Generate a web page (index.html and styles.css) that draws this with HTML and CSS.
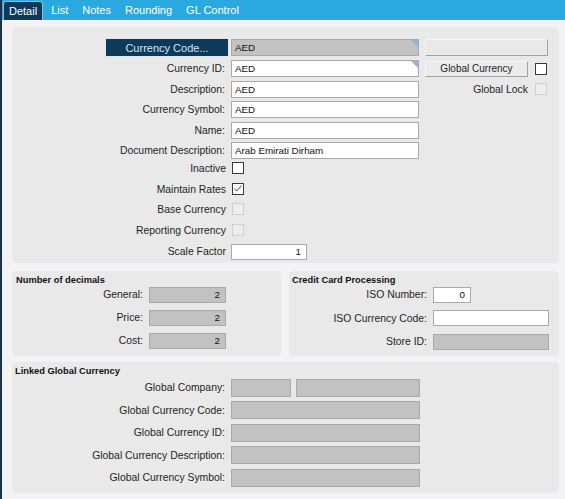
FILE: index.html
```html
<!DOCTYPE html>
<html>
<head>
<meta charset="utf-8">
<link rel="stylesheet" href="styles.css">
</head>
<body>
<div class="app">
  <nav class="tabs">
    <span class="tab active">Detail</span>
    <span class="tab">List</span>
    <span class="tab">Notes</span>
    <span class="tab">Rounding</span>
    <span class="tab">GL Control</span>
  </nav>
  <main class="content">
    <section class="panel panel-main">
      <div class="row row-first">
        <div class="label-cell"><span class="lookup-btn">Currency Code...</span></div>
        <div class="field grey marked">AED</div>
        <div class="side"><span class="btn btn-wide"></span></div>
      </div>
      <div class="row">
        <span class="label-cell">Currency ID:</span>
        <div class="field marked">AED</div>
        <div class="side"><span class="btn btn-global">Global Currency</span><span class="cb"></span></div>
      </div>
      <div class="row">
        <span class="label-cell">Description:</span>
        <div class="field">AED</div>
        <div class="side side-end"><span class="side-label">Global Lock</span><span class="cb disabled"></span></div>
      </div>
      <div class="row">
        <span class="label-cell">Currency Symbol:</span>
        <div class="field">AED</div>
      </div>
      <div class="row">
        <span class="label-cell">Name:</span>
        <div class="field">AED</div>
      </div>
      <div class="row">
        <span class="label-cell">Document Description:</span>
        <div class="field">Arab Emirati Dirham</div>
      </div>
      <div class="row row-check">
        <span class="label-cell cb-label">Inactive</span>
        <div><span class="cb"></span></div>
      </div>
      <div class="row row-check">
        <span class="label-cell cb-label">Maintain Rates</span>
        <div><span class="cb"><svg viewBox="0 0 12 12" width="10" height="10"><polyline points="1.5,5.5 4.5,8.5 10,2" fill="none" stroke="#333" stroke-width="1.1"/></svg></span></div>
      </div>
      <div class="row row-check">
        <span class="label-cell cb-label">Base Currency</span>
        <div><span class="cb disabled"></span></div>
      </div>
      <div class="row row-check">
        <span class="label-cell cb-label">Reporting Currency</span>
        <div><span class="cb disabled"></span></div>
      </div>
      <div class="row row-scale">
        <span class="label-cell cb-label">Scale Factor</span>
        <div class="field num scale">1</div>
      </div>
    </section>

    <div class="panel-pair">
      <section class="panel panel-dec">
        <h3 class="heading">Number of decimals</h3>
        <div class="sub-rows">
          <div class="sub-row"><span class="label-cell">General:</span><div class="field grey num">2</div></div>
          <div class="sub-row"><span class="label-cell">Price:</span><div class="field grey num">2</div></div>
          <div class="sub-row"><span class="label-cell">Cost:</span><div class="field grey num">2</div></div>
        </div>
      </section>
      <section class="panel panel-cc">
        <h3 class="heading">Credit Card Processing</h3>
        <div class="sub-rows">
          <div class="sub-row"><span class="label-cell">ISO Number:</span><div class="field num iso-num">0</div></div>
          <div class="sub-row"><span class="label-cell">ISO Currency Code:</span><div class="field wide"></div></div>
          <div class="sub-row"><span class="label-cell">Store ID:</span><div class="field grey wide"></div></div>
        </div>
      </section>
    </div>

    <section class="panel panel-linked">
      <h3 class="heading">Linked Global Currency</h3>
      <div class="sub-rows">
        <div class="sub-row"><span class="label-cell">Global Company:</span><div class="pair-fields"><div class="field grey co-a"></div><div class="field grey co-b"></div></div></div>
        <div class="sub-row"><span class="label-cell">Global Currency Code:</span><div class="field grey"></div></div>
        <div class="sub-row"><span class="label-cell">Global Currency ID:</span><div class="field grey"></div></div>
        <div class="sub-row"><span class="label-cell">Global Currency Description:</span><div class="field grey"></div></div>
        <div class="sub-row"><span class="label-cell">Global Currency Symbol:</span><div class="field grey"></div></div>
      </div>
    </section>
  </main>
</div>
</body>
</html>
```
FILE: styles.css
```css
* { box-sizing: border-box; }
html, body { margin: 0; padding: 0; }
body {
  font-family: "Liberation Sans", Arial, sans-serif;
  color: #1e1e1e;
  background: #f3f3f5;
}
.app {
  width: 565px;
  height: 499px;
  border-left: 2px solid #17334d;
  background: #f3f3f5;
  overflow: hidden;
}
.tabs {
  height: 20px;
  background: #2aa8e0;
  display: flex;
  align-items: flex-end;
  gap: 2px;
  padding-left: 1px;
  border-bottom: 1px solid #f7fbfd;
  box-sizing: content-box;
}
.tab {
  height: 19px;
  line-height: 18px;
  padding: 0 6px;
  font-size: 11px;
  color: #ffffff;
}
.tab.active {
  background: #0d3a5b;
  border: 1px solid #9cb6cb;
  border-bottom: none;
  border-radius: 3px 3px 0 0;
  padding: 0 5px;
}
.content {
  padding: 6px 6px 0 10px;
}
.panel {
  background: #e9e9e9;
  border-radius: 4px;
}
.panel-main {
  display: flex;
  flex-direction: column;
  gap: 3.4px;
  padding: 11px 0 3px 0;
}
.row {
  display: grid;
  grid-template-columns: 219px 188px 129px;
  height: 17px;
  align-items: center;
}
.row-first { height: 19px; }
.label-cell {
  text-align: right;
  padding-right: 6px;
  font-size: 10.4px;
  white-space: nowrap;
}
.cb-label { padding-right: 5px; }
.row-check { align-items: start; }
.row-check .label-cell { line-height: 14px; }
.row-check .cb { margin-left: 1px; }
.lookup-btn {
  display: inline-flex;
  align-items: center;
  justify-content: center;
  width: 124px;
  height: 19px;
  margin-right: -2px;
  background: #0d3a5a;
  border: 1px solid #dfe6ec;
  color: #dce4ea;
  font-size: 11px;
}
.row-first .label-cell { padding-right: 4px; }
.field {
  position: relative;
  height: 17px;
  background: #ffffff;
  border: 1px solid #a9a9a9;
  font-size: 9.8px;
  display: flex;
  align-items: center;
  padding: 0 3px;
  color: #111;
  white-space: nowrap;
  overflow: hidden;
}
.field.grey { background: #c2c2c2; }
.field.num { justify-content: flex-end; padding-right: 5px; }
.field.marked::after {
  content: "";
  position: absolute;
  top: 0;
  right: 0;
  border-style: solid;
  border-width: 0 7px 7px 0;
  border-color: transparent #8fb4e0 transparent transparent;
}
.side {
  display: flex;
  align-items: center;
  padding-left: 6px;
  height: 17px;
}
.side-end { justify-content: flex-end; padding-right: 1px; }
.side-label { font-size: 10.4px; margin-right: 7px; }
.btn {
  display: inline-flex;
  align-items: center;
  justify-content: center;
  background: #ebebeb;
  border: 1px solid;
  border-color: #f6f6f6 #a3a3a3 #a3a3a3 #f6f6f6;
  font-size: 10px;
  color: #1e1e1e;
}
.btn-wide { width: 123px; height: 17px; background: #e9e9e9; }
.btn-global { width: 103px; height: 16px; margin-right: 7px; }
.cb {
  display: inline-flex;
  align-items: center;
  justify-content: center;
  width: 12px;
  height: 12px;
  background: #ffffff;
  border: 1px solid #3a3a3a;
  vertical-align: top;
}
.cb.disabled {
  background: #ededed;
  border-color: #cfcfcf;
}
.row-scale { height: 16px; }
.field.scale { width: 76px; height: 16px; }

.panel-pair {
  display: grid;
  grid-template-columns: 269px 270px;
  column-gap: 8px;
  margin-top: 8px;
}
.heading {
  margin: 0;
  font-size: 9.3px;
  font-weight: bold;
  line-height: 12px;
  color: #111;
}
.panel-dec, .panel-cc {
  height: 85px;
  padding-top: 3px;
}
.panel-dec .heading { padding-left: 4px; }
.panel-cc .heading { padding-left: 3px; }
.sub-rows {
  display: flex;
  flex-direction: column;
  margin-top: 1px;
}
.sub-row {
  display: flex;
  align-items: center;
}
.panel-dec .sub-rows { gap: 7px; }
.panel-dec .label-cell { width: 137px; }
.panel-dec .field { width: 77px; height: 16px; }
.panel-cc .sub-rows { gap: 7.5px; }
.panel-cc .label-cell { width: 144px; }
.panel-cc .field { height: 16px; }
.field.iso-num { width: 38px; }
.field.wide { width: 116px; }

.panel-linked {
  margin-top: 6px;
  height: 131px;
  padding-top: 3px;
}
.panel-linked .heading { padding-left: 3px; }
.panel-linked .sub-rows { gap: 4.5px; margin-top: 2px; }
.panel-linked .label-cell { width: 219px; }
.panel-linked .field { width: 189px; height: 18px; }
.pair-fields { display: flex; gap: 5px; }
.panel-linked .field.co-a { width: 60px; }
.panel-linked .field.co-b { width: 124px; }
```
